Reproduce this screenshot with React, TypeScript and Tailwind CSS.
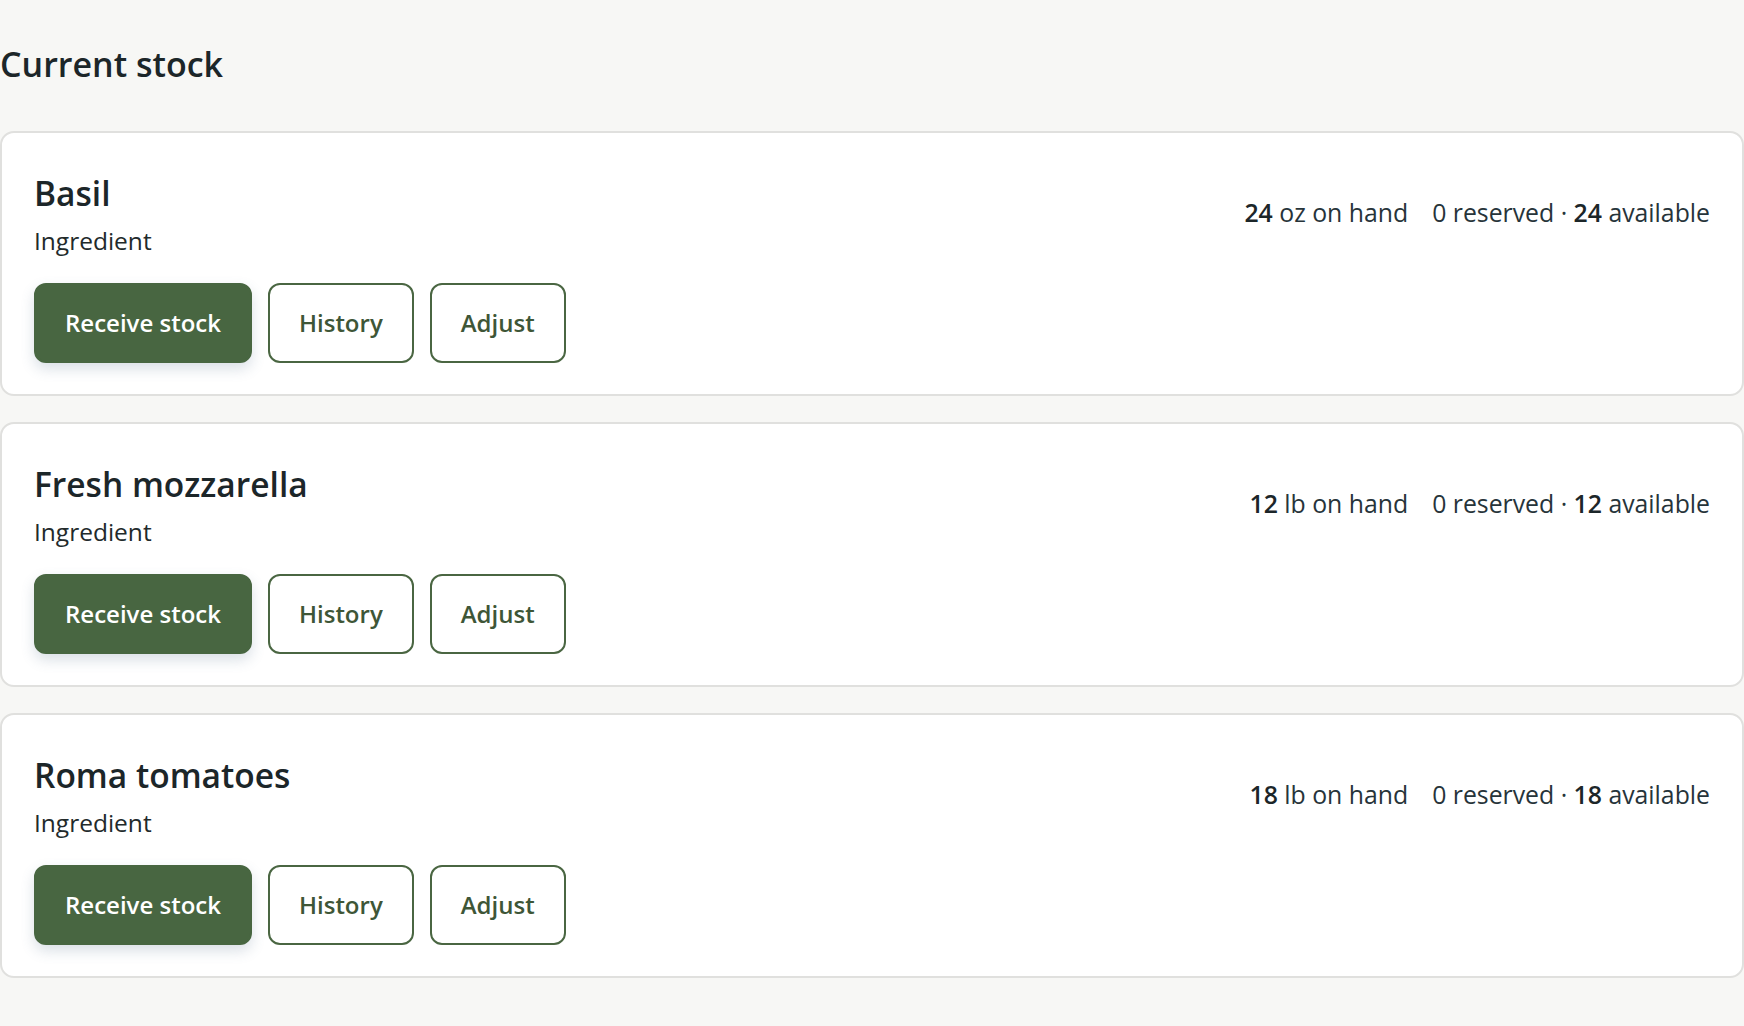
import React from "react";

interface StockRow {
  id: string;
  name: string;
  kind: string;
  onHand: number;
  unit: string;
  reserved: number;
}

const rows: StockRow[] = [
  { id: "basil", name: "Basil", kind: "Ingredient", onHand: 24, unit: "oz", reserved: 0 },
  { id: "mozz", name: "Fresh mozzarella", kind: "Ingredient", onHand: 12, unit: "lb", reserved: 0 },
  { id: "roma", name: "Roma tomatoes", kind: "Ingredient", onHand: 18, unit: "lb", reserved: 0 },
];

function StockCard({ row }: { row: StockRow }): React.ReactElement {
  const available = row.onHand - row.reserved;
  return (
    <div className="rounded-[14px] border-2 border-[#e0e0de] bg-white px-[32px] pt-[40px] pb-[31px]">
      <div className="flex items-start justify-between">
        <div>
          <h2 className="text-[33.5px] font-semibold leading-[40px] text-[#1c2629]">{row.name}</h2>
          <p className="mt-[10px] text-[24.5px] leading-[36px] text-[#222a2b]">{row.kind}</p>
        </div>
        <div className="mt-[21px] flex gap-6 text-[24.8px] leading-[36px] text-[#27343a]">
          <span>
            <span className="font-semibold text-[#1c2629]">{row.onHand}</span> {row.unit} on hand
          </span>
          <span>
            {row.reserved} reserved · <span className="font-semibold text-[#1c2629]">{available}</span> available
          </span>
        </div>
      </div>
      <div className="mt-[24px] flex gap-4">
        <button className="flex h-[80px] items-center rounded-[12px] border-2 border-[#486641] bg-[#486641] px-[29px] text-[24px] font-semibold text-white shadow-[0_6px_14px_rgba(70,100,130,0.2)]">
          Receive stock
        </button>
        <button className="flex h-[80px] items-center rounded-[12px] border-2 border-[#4a6642] bg-white px-[29px] text-[24px] font-semibold text-[#3e5637]">
          History
        </button>
        <button className="flex h-[80px] items-center rounded-[12px] border-2 border-[#4a6642] bg-white px-[29px] text-[24px] font-semibold text-[#3e5637]">
          Adjust
        </button>
      </div>
    </div>
  );
}

export default function App(): React.ReactElement {
  return (
    <div className="min-h-screen bg-[#f7f7f5] pt-[44px] font-['Open_Sans',sans-serif]">
      <h1 className="text-[34px] font-semibold leading-[41px] text-[#1c2629]">Current stock</h1>
      <div className="mt-[46px] flex flex-col gap-[26px]">
        {rows.map((r) => (
          <StockCard key={r.id} row={r} />
        ))}
      </div>
    </div>
  );
}
